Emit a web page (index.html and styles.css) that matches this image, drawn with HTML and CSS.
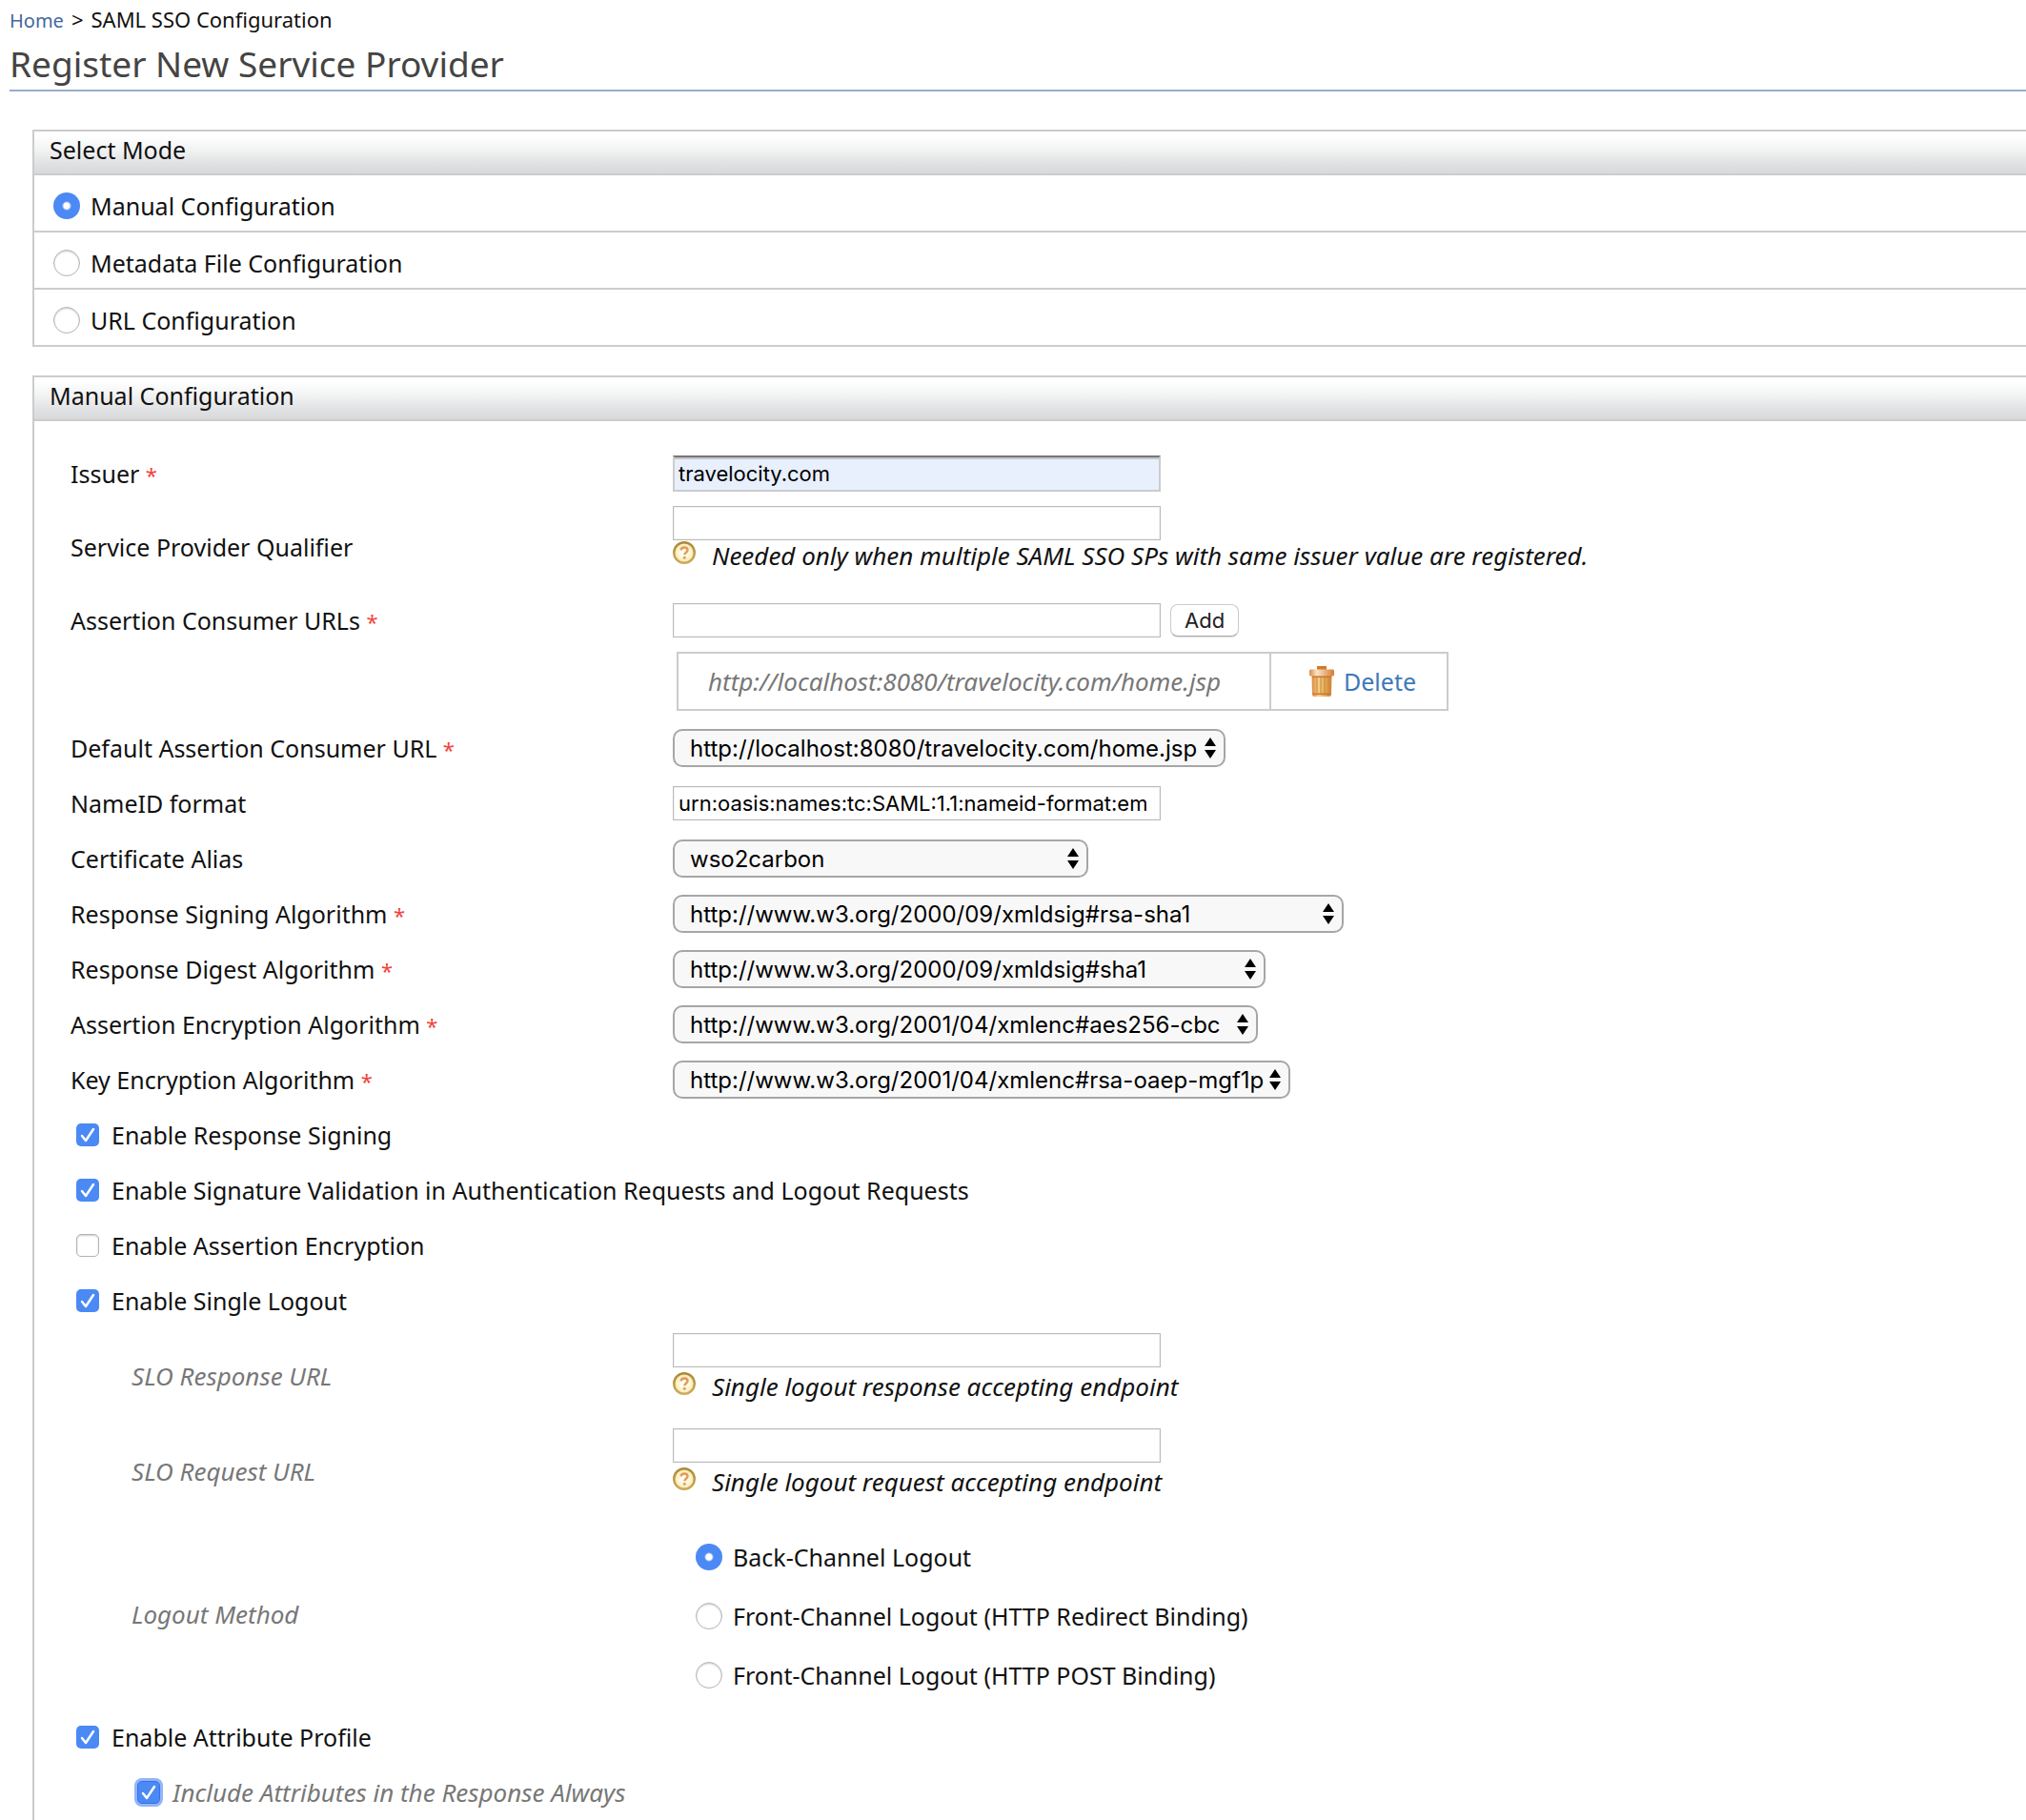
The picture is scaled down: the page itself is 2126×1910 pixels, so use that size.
FILE: index.html
```html
<!DOCTYPE html>
<html lang="en">
<head>
<meta charset="utf-8">
<title>Register New Service Provider</title>
<link rel="stylesheet" href="styles.css">
</head>
<body>
<svg class="sprite" aria-hidden="true">
  <defs>
    <radialGradient id="help-face"><stop offset="0" stop-color="#fff"/><stop offset=".5" stop-color="#fdf8dc"/><stop offset="1" stop-color="#f6e6a0"/></radialGradient>
    <linearGradient id="help-rim" x1="0" y1="0" x2="0" y2="1"><stop offset="0" stop-color="#a98a3c"/><stop offset="1" stop-color="#cdaa5c"/></linearGradient>
    <linearGradient id="bin-body"><stop offset="0" stop-color="#d98a3d"/><stop offset=".35" stop-color="#f6cf90"/><stop offset=".6" stop-color="#e2b35a"/><stop offset="1" stop-color="#d0803a"/></linearGradient>
    <linearGradient id="bin-lid"><stop offset="0" stop-color="#dd8a45"/><stop offset=".3" stop-color="#fbe3c6"/><stop offset="1" stop-color="#d67c33"/></linearGradient>
  </defs>
  <symbol id="icon-help" viewBox="0 0 24 24">
    <circle cx="12" cy="12" r="10.8" fill="url(#help-face)" stroke="url(#help-rim)" stroke-width="2.4"/>
    <path d="M8.600 9.400C8.800 7.400 10.200 6.400 12.100 6.400c2 0 3.400 1 3.400 2.800 0 2.400-3.100 2.600-3.100 5" fill="none" stroke="#e39a5c" stroke-width="2.500"/>
    <circle cx="12.300" cy="17.200" r="1.500" fill="#e39a5c"/>
  </symbol>
  <symbol id="icon-bin" viewBox="0 0 26 32">
    <path d="M8 0h10v5H8z" fill="#cf7b2b"/>
    <path d="M2.500 10h21l-.5 20q-.2 2-2 2H5q-1.800 0-2-2z" fill="url(#bin-body)"/>
    <path d="M3 10h20v2H3zM3.500 28.500h19v1.500h-19z" fill="#c9762f"/>
    <path d="M8 12v16M12 12v16M16 12v16M20 12v16" stroke="#c98a35"/>
    <rect y="3.500" width="26" height="7" rx="1.500" fill="url(#bin-lid)"/>
  </symbol>
</svg>

<nav class="breadcrumb"><a href="#">Home</a><span>&gt;</span><span class="current">SAML SSO Configuration</span></nav>
<h1 class="page-title">Register New Service Provider</h1>

<main class="content">
  <section class="panel">
    <h2 class="panel-head">Select Mode</h2>
    <label class="mode"><input type="radio" name="mode" checked>Manual Configuration</label>
    <label class="mode"><input type="radio" name="mode">Metadata File Configuration</label>
    <label class="mode"><input type="radio" name="mode">URL Configuration</label>
  </section>

  <section class="panel">
    <h2 class="panel-head">Manual Configuration</h2>
    <form class="form">
      <div class="row">
        <label for="issuer">Issuer <span class="required">*</span></label>
        <div class="field"><input class="text filled" id="issuer" type="text" value="travelocity.com"></div>
      </div>
      <div class="row row-hint">
        <label for="qualifier">Service Provider Qualifier</label>
        <div class="field stack">
          <input class="text" id="qualifier" type="text">
          <p class="hint"><svg><use href="#icon-help"/></svg>Needed only when multiple SAML SSO SPs with same issuer value are registered.</p>
        </div>
      </div>
      <div class="row">
        <label for="acs">Assertion Consumer URLs <span class="required">*</span></label>
        <div class="field"><input class="text" id="acs" type="text"><button class="add" type="button">Add</button></div>
      </div>
      <div class="row row-urls">
        <div class="field">
          <table class="urls">
            <tr>
              <td class="url">http://localhost:8080/travelocity.com/home.jsp</td>
              <td class="action"><a href="#"><svg><use href="#icon-bin"/></svg>Delete</a></td>
            </tr>
          </table>
        </div>
      </div>
      <div class="row">
        <label for="default-acs">Default Assertion Consumer URL <span class="required">*</span></label>
        <div class="field"><select class="select w-acs" id="default-acs"><option>http://localhost:8080/travelocity.com/home.jsp</option></select></div>
      </div>
      <div class="row">
        <label for="nameid">NameID format</label>
        <div class="field"><input class="text" id="nameid" type="text" value="urn:oasis:names:tc:SAML:1.1:nameid-format:emailAddress"></div>
      </div>
      <div class="row">
        <label for="cert">Certificate Alias</label>
        <div class="field"><select class="select w-cert" id="cert"><option>wso2carbon</option></select></div>
      </div>
      <div class="row">
        <label for="signing">Response Signing Algorithm <span class="required">*</span></label>
        <div class="field"><select class="select w-signing" id="signing"><option>http://www.w3.org/2000/09/xmldsig#rsa-sha1</option></select></div>
      </div>
      <div class="row">
        <label for="digest">Response Digest Algorithm <span class="required">*</span></label>
        <div class="field"><select class="select w-digest" id="digest"><option>http://www.w3.org/2000/09/xmldsig#sha1</option></select></div>
      </div>
      <div class="row">
        <label for="assertion-enc">Assertion Encryption Algorithm <span class="required">*</span></label>
        <div class="field"><select class="select w-assertion" id="assertion-enc"><option>http://www.w3.org/2001/04/xmlenc#aes256-cbc</option></select></div>
      </div>
      <div class="row">
        <label for="key-enc">Key Encryption Algorithm <span class="required">*</span></label>
        <div class="field"><select class="select w-key" id="key-enc"><option>http://www.w3.org/2001/04/xmlenc#rsa-oaep-mgf1p</option></select></div>
      </div>
      <label class="check"><input type="checkbox" checked>Enable Response Signing</label>
      <label class="check"><input type="checkbox" checked>Enable Signature Validation in Authentication Requests and Logout Requests</label>
      <label class="check"><input type="checkbox">Enable Assertion Encryption</label>
      <label class="check"><input type="checkbox" checked>Enable Single Logout</label>
      <div class="row row-slo">
        <label class="sub" for="slo-response">SLO Response URL</label>
        <div class="field stack">
          <input class="text" id="slo-response" type="text">
          <p class="hint"><svg><use href="#icon-help"/></svg>Single logout response accepting endpoint</p>
        </div>
      </div>
      <div class="row row-slo">
        <label class="sub" for="slo-request">SLO Request URL</label>
        <div class="field stack">
          <input class="text" id="slo-request" type="text">
          <p class="hint"><svg><use href="#icon-help"/></svg>Single logout request accepting endpoint</p>
        </div>
      </div>
      <div class="row row-logout" role="radiogroup" aria-labelledby="logout-method">
        <span class="sub" id="logout-method">Logout Method</span>
        <div class="methods">
          <label><input type="radio" name="logout" checked>Back-Channel Logout</label>
          <label><input type="radio" name="logout">Front-Channel Logout (HTTP Redirect Binding)</label>
          <label><input type="radio" name="logout">Front-Channel Logout (HTTP POST Binding)</label>
        </div>
      </div>
      <label class="check"><input type="checkbox" checked>Enable Attribute Profile</label>
      <label class="check nested"><input class="focused" type="checkbox" checked>Include Attributes in the Response Always</label>
    </form>
  </section>
</main>
</body>
</html>
```
FILE: styles.css
```css
* { box-sizing: border-box; }

body {
  margin: 0;
  padding: 4px 0 0 10px;
  background: #fff;
  color: #111;
  font: 25px/32px "Noto Sans", sans-serif;
}

.sprite { position: absolute; width: 0; height: 0; }

a { color: #3e78b8; text-decoration: none; }

.breadcrumb {
  display: flex;
  align-items: baseline;
  gap: 8px;
  height: 32px;
  font-size: 22px;
}
.breadcrumb a { color: #44689c; font-size: 20px; }

.page-title {
  margin: 6px 0 0;
  padding-bottom: 2px;
  border-bottom: 2px solid #9aabcf;
  color: #444;
  font-size: 37px;
  font-weight: 400;
  line-height: 50px;
}

.content {
  display: flex;
  flex-direction: column;
  gap: 30px;
  padding: 40px 0 0 24px;
}

.panel {
  border: 2px solid #ccc;
  border-right: 0;
}
.panel:last-child { border-bottom: 0; }

.panel-head {
  margin: 0;
  padding: 3px 16px 9px;
  background: linear-gradient(#fff 10%, #f1f2f2 45%, #e1e2e4 75%, #d8d9da);
  font-size: 25px;
  font-weight: 400;
}

.mode {
  display: flex;
  align-items: center;
  gap: 11px;
  height: 60px;
  padding: 6px 0 0 20px;
  border-top: 2px solid #ccc;
}

.form { border-top: 2px solid #ccc; padding-top: 26px; }

.row {
  display: grid;
  grid-template-columns: 632px 1fr;
  align-items: center;
  min-height: 58px;
  padding-left: 38px;
}
.row-hint { min-height: 96px; }
.row-slo { min-height: 100px; }
.row-urls { min-height: 76px; }
.row-urls .field { grid-column: 2; padding: 0 0 6px 4px; }
.row-logout { min-height: 200px; }

.required { color: #f0443a; font-size: 22px; }
.sub, .hint, .url, .nested { font-size: 26px; font-style: italic; }
.sub, .url, .nested { color: #777; }
.sub { padding-left: 64px; }

.field { display: flex; align-items: center; gap: 10px; }
.stack {
  flex-direction: column;
  align-items: flex-start;
  align-self: start;
  gap: 0;
  padding-top: 5px;
}
.row-slo .stack { gap: 4px; }

.text {
  width: 512px;
  height: 36px;
  padding: 0 14px 0 5px;
  border: 1px solid #bbb;
  background: #fff;
  box-shadow: inset 0 0 0 1px #f2f2f2;
  color: #000;
  font: 22px "Inter", sans-serif;
}
.filled {
  height: 38px;
  border: 2px solid #ccc;
  border-top-color: #777;
  padding-left: 4px;
  background: #e8effd;
  box-shadow: inset 0 2px #c4c4c8;
}

.hint {
  display: flex;
  gap: 17px;
  margin: 0;
}
.hint svg { width: 24px; height: 24px; margin-top: 1px; }

.add {
  height: 34px;
  padding: 0 14px;
  border: 1px solid #ccc;
  border-bottom-color: #aaa;
  border-radius: 8px;
  background: #fff;
  box-shadow: 0 1px 1px #ddd;
  color: #222;
  font: 22px "Inter", sans-serif;
}

.urls { border-collapse: collapse; }
.urls td { height: 60px; padding: 0; border: 2px solid #ccc; }
.urls .url { width: 622px; padding-left: 31px; }
.urls .action { padding: 0 32px 0 40px; }
.urls a { display: flex; align-items: center; gap: 10px; }
.urls svg { width: 26px; height: 32px; }

.select {
  appearance: none;
  height: 40px;
  padding: 0 20px 0 16px;
  border: 2px solid #a6a6a6;
  border-radius: 10px;
  background: #f8f8f8 url("data:image/svg+xml,%3Csvg xmlns='http://www.w3.org/2000/svg' width='12' height='22'%3E%3Cpath d='M6 0l6 9H0zM6 22l6-9H0z'/%3E%3C/svg%3E") no-repeat right 8px center;
  color: #000;
  font: 24px "Inter", sans-serif;
}
.w-acs { width: 580px; }
.w-cert { width: 436px; }
.w-signing { width: 704px; }
.w-digest { width: 622px; }
.w-assertion { width: 614px; }
.w-key { width: 648px; }

.check {
  display: flex;
  align-items: center;
  gap: 13px;
  height: 58px;
  padding-left: 44px;
}
.check.nested { padding-left: 108px; }

.methods { display: flex; flex-direction: column; gap: 30px; padding: 4px 0 0 24px; }
.methods label { display: flex; align-items: center; gap: 11px; }

input[type="radio"], input[type="checkbox"] {
  appearance: none;
  flex: none;
  margin: 0;
  border: 1px solid #b4b4b4;
  background: #fff;
  box-shadow: inset 0 1px 2px #ccc;
}
input[type="radio"] { width: 28px; height: 28px; border-radius: 50%; }
input[type="checkbox"] { width: 24px; height: 24px; border-radius: 5px; }
input[type="radio"]:checked {
  border: 0;
  background: radial-gradient(circle, #fff 3px, #4b89f5 5px);
  box-shadow: none;
}
input[type="checkbox"]:checked {
  border: 0;
  background: #4b89f5 url("data:image/svg+xml,%3Csvg xmlns='http://www.w3.org/2000/svg' width='24' height='24'%3E%3Cpath d='M6 13l4 5 8-12' fill='none' stroke='%23fff' stroke-width='2.500' stroke-linecap='round' stroke-linejoin='round'/%3E%3C/svg%3E") center;
  box-shadow: none;
}
input.focused[type="checkbox"] {
  border: 1px solid #3672e8;
  box-shadow: 0 0 0 3px #93b4f7;
}
```
